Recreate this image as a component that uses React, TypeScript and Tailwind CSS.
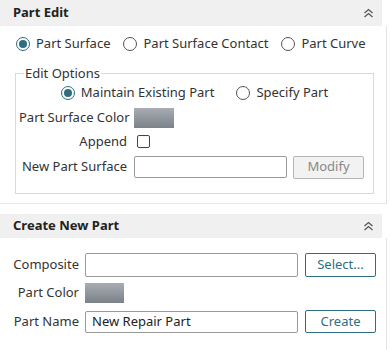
import React from 'react';

function ChevronsUp() {
  return (
    <svg width="11" height="10" viewBox="0 0 11 10" fill="none" stroke="#555" strokeWidth="1.2">
      <path d="M1.5 5 L5.5 1.5 L9.5 5" />
      <path d="M1.5 9 L5.5 5.5 L9.5 9" />
    </svg>
  );
}

function Radio({ label, checked }: { label: string; checked?: boolean }) {
  return (
    <label className="flex items-center gap-[6px] whitespace-nowrap">
      <span
        className={`w-[14px] h-[14px] rounded-full border flex items-center justify-center ${
          checked ? 'border-[#2d6f80]' : 'border-[#555]'
        }`}
      >
        {checked && <span className="w-[8px] h-[8px] rounded-full bg-[#2d6f80]" />}
      </span>
      {label}
    </label>
  );
}

function Swatch({ w }: { w: string }) {
  return <div className={`${w} h-[20px] bg-gradient-to-b from-[#a9adb3] to-[#7b828a]`} />;
}

function SectionHeader({ title, h }: { title: string; h: string }) {
  return (
    <div className={`${h} bg-[#f0f0f0] mr-[5px] flex items-center justify-between pl-[13px] pr-[8px]`}>
      <span className="font-bold text-[#222]">{title}</span>
      <ChevronsUp />
    </div>
  );
}

export default function App() {
  return (
    <div
      className="w-[390px] h-[350px] bg-white text-[13px] text-[#333] overflow-hidden"
      style={{ fontFamily: '"Noto Sans", "Open Sans", sans-serif' }}
    >
      {/* Part Edit */}
      <div className="h-[204px] border-b border-[#e8e8e8] mr-[3px] flex flex-col">
        <SectionHeader title="Part Edit" h="h-[26px]" />
        <div className="flex-1 border-r border-[#e4e4e4]">
          <div className="flex items-center gap-[13px] pl-[16px] h-[14px] mt-[11px]">
            <Radio label="Part Surface" checked />
            <Radio label="Part Surface Contact" />
            <Radio label="Part Curve" />
          </div>

          <fieldset className="ml-[15px] mr-[12px] mt-[14px] border border-[#d9d9d9] px-[3px] pb-[14px]">
            <legend className="ml-[5px] px-[1px] leading-[16px]">Edit Options</legend>
            <div className="flex justify-center gap-[22px] h-[16px] items-center mt-[4px]">
              <Radio label="Maintain Existing Part" checked />
              <Radio label="Specify Part" />
            </div>
            <div className="grid grid-cols-[108px_1fr] gap-x-[7px] items-center mt-[7px]">
              <span className="text-right whitespace-nowrap">Part Surface Color</span>
              <Swatch w="w-[40px]" />
              <span className="text-right mt-[4px]">Append</span>
              <div className="mt-[4px] pl-[3px]">
                <div className="w-[13px] h-[13px] border border-[#444] rounded-[2px]" />
              </div>
              <span className="text-right mt-[4px]">New Part Surface</span>
              <div className="mt-[4px] flex items-center gap-[6px]">
                <div className="w-[153px] h-[22px] border border-[#999] rounded-[2px]" />
                <button className="w-[71px] h-[23px] border border-[#b5b5b5] bg-[#f2f2f2] text-[#888] rounded-[2px]">
                  Modify
                </button>
              </div>
            </div>
          </fieldset>
        </div>
      </div>

      {/* Create New Part */}
      <div className="mt-[10px] mr-[3px]">
        <SectionHeader title="Create New Part" h="h-[24px]" />
        <div className="border-r border-[#e4e4e4] pt-[15px] pb-[18px]">
          <div className="grid grid-cols-[79px_1fr] gap-x-[6px] items-center">
            <span className="text-right">Composite</span>
            <div className="flex items-center gap-[7px]">
              <div className="w-[213px] h-[24px] border border-[#999] rounded-[2px]" />
              <button className="w-[71px] h-[24px] border border-[#2d6f80] text-[#2d6f80] rounded-[2px]">
                Select...
              </button>
            </div>
            <span className="text-right mt-[6px]">Part Color</span>
            <div className="mt-[6px]">
              <Swatch w="w-[39px]" />
            </div>
            <span className="text-right mt-[7px]">Part Name</span>
            <div className="flex items-center gap-[7px] mt-[7px]">
              <div className="w-[213px] h-[22px] border border-[#999] rounded-[2px] flex items-center pl-[6px] text-[#222]">
                New Repair Part
              </div>
              <button className="w-[71px] h-[23px] border border-[#2d6f80] text-[#2d6f80] rounded-[2px]">
                Create
              </button>
            </div>
          </div>
        </div>
      </div>
    </div>
  );
}
